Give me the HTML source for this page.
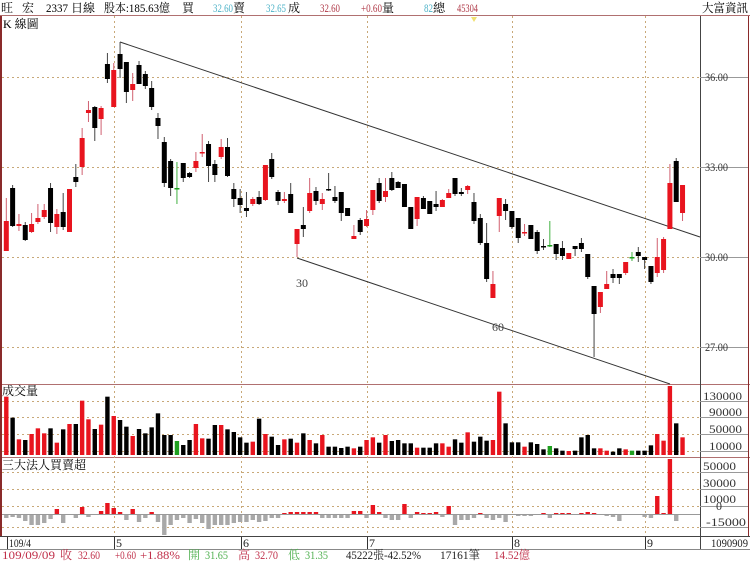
<!DOCTYPE html>
<html><head><meta charset="utf-8"><style>
html,body{margin:0;padding:0;background:#fff;width:750px;height:561px;overflow:hidden}
svg{display:block}
text{font-family:"Liberation Serif","Noto Serif CJK TC","Noto Sans CJK TC",serif;font-size:12px}
</style></head><body>
<svg id="s" width="750" height="561" xmlns="http://www.w3.org/2000/svg">
<rect width="750" height="561" fill="#fff"/>
<g font-size="12">
<text x="1" y="12">旺</text><text x="22" y="12">宏</text>
<text x="46" y="12" textLength="22" lengthAdjust="spacingAndGlyphs">2337</text>
<text x="71" y="12">日線</text>
<text x="104" y="12" textLength="66" lengthAdjust="spacingAndGlyphs">股本:185.63億</text>
<text x="182" y="12">買</text>
<text x="213" y="12" fill="#4fb3c8" textLength="20" lengthAdjust="spacingAndGlyphs">32.60</text><text x="233" y="12">賣</text>
<text x="266" y="12" fill="#4fb3c8" textLength="20" lengthAdjust="spacingAndGlyphs">32.65</text><text x="288" y="12">成</text>
<text x="320" y="12" fill="#b03a48" textLength="20" lengthAdjust="spacingAndGlyphs">32.60</text>
<text x="361" y="12" fill="#b03a48" textLength="21" lengthAdjust="spacingAndGlyphs">+0.60</text><text x="382" y="12">量</text>
<text x="424" y="12" fill="#4fb3c8" textLength="9" lengthAdjust="spacingAndGlyphs">82</text><text x="433" y="12">總</text>
<text x="457" y="12" fill="#b03a48" textLength="21" lengthAdjust="spacingAndGlyphs">45304</text>
<text x="702" y="12" textLength="46" lengthAdjust="spacingAndGlyphs">大富資訊</text>
<path d="M471 17 L477 17 L474 22 Z" fill="#f0e070"/>
</g>
<g stroke="#b07070" fill="none" stroke-width="1">
<line x1="0" y1="15.5" x2="750" y2="15.5"/>
<line x1="0" y1="384.5" x2="750" y2="384.5"/>
<line x1="0" y1="457.5" x2="750" y2="457.5"/>
</g>
<line x1="0" y1="536.5" x2="750" y2="536.5" stroke="#444"/>
<line x1="0" y1="549.5" x2="750" y2="549.5" stroke="#888"/>
<line x1="1" y1="16" x2="1" y2="536" stroke="#8a2a2a" stroke-width="2"/>
<line x1="700.5" y1="16" x2="700.5" y2="549" stroke="#444"/>
<line x1="748.5" y1="16" x2="748.5" y2="536" stroke="#8a2a2a"/>
<g stroke="#c8a878" stroke-dasharray="2,3" stroke-width="1">
<line x1="2" y1="77.5" x2="700" y2="77.5"/><line x1="2" y1="167.5" x2="700" y2="167.5"/>
<line x1="2" y1="257.5" x2="700" y2="257.5"/><line x1="2" y1="347.5" x2="700" y2="347.5"/>
<line x1="2" y1="401.5" x2="700" y2="401.5"/><line x1="2" y1="417.5" x2="700" y2="417.5"/>
<line x1="2" y1="434.5" x2="700" y2="434.5"/><line x1="2" y1="451.5" x2="700" y2="451.5"/>
<line x1="2" y1="472.5" x2="700" y2="472.5"/><line x1="2" y1="489.5" x2="700" y2="489.5"/>
<line x1="2" y1="506.5" x2="700" y2="506.5"/><line x1="2" y1="527.5" x2="700" y2="527.5"/>
<line x1="114.5" y1="16" x2="114.5" y2="536"/><line x1="241.5" y1="16" x2="241.5" y2="536"/>
<line x1="367.5" y1="16" x2="367.5" y2="536"/><line x1="512.5" y1="16" x2="512.5" y2="536"/>
<line x1="645.5" y1="16" x2="645.5" y2="536"/>
</g>
<g stroke="#999"><line x1="700" y1="77.5" x2="748" y2="77.5"/><line x1="700" y1="167.5" x2="748" y2="167.5"/><line x1="700" y1="257.5" x2="748" y2="257.5"/><line x1="700" y1="347.5" x2="748" y2="347.5"/>
<line x1="700" y1="401.5" x2="748" y2="401.5"/><line x1="700" y1="417.5" x2="748" y2="417.5"/><line x1="700" y1="434.5" x2="748" y2="434.5"/><line x1="700" y1="451.5" x2="748" y2="451.5"/>
<line x1="700" y1="472.5" x2="748" y2="472.5"/><line x1="700" y1="489.5" x2="748" y2="489.5"/><line x1="700" y1="506.5" x2="748" y2="506.5"/><line x1="700" y1="527.5" x2="748" y2="527.5"/></g>
<line x1="2" y1="514.5" x2="700" y2="514.5" stroke="#999"/>
<text x="3" y="28">K 線圖</text>
<text x="2" y="395">成交量</text>
<text x="2" y="469">三大法人買賣超</text>
<g fill="#333" font-size="12">
<text x="705" y="81" textLength="23" lengthAdjust="spacingAndGlyphs">36.00</text>
<text x="705" y="171" textLength="23" lengthAdjust="spacingAndGlyphs">33.00</text>
<text x="705" y="261" textLength="23" lengthAdjust="spacingAndGlyphs">30.00</text>
<text x="705" y="351" textLength="23" lengthAdjust="spacingAndGlyphs">27.00</text>
<text x="703" y="400" textLength="39" lengthAdjust="spacingAndGlyphs">130000</text>
<text x="709" y="416" textLength="33" lengthAdjust="spacingAndGlyphs">90000</text>
<text x="709" y="433" textLength="33" lengthAdjust="spacingAndGlyphs">50000</text>
<text x="709" y="450" textLength="33" lengthAdjust="spacingAndGlyphs">10000</text>
<text x="703" y="470" textLength="33" lengthAdjust="spacingAndGlyphs">50000</text>
<text x="703" y="487" textLength="33" lengthAdjust="spacingAndGlyphs">30000</text>
<text x="703" y="503" textLength="33" lengthAdjust="spacingAndGlyphs">10000</text>
<text x="716" y="510">0</text>
<text x="706" y="526" textLength="40" lengthAdjust="spacingAndGlyphs">-15000</text>
</g>
<g stroke="#333"><line x1="7.5" y1="537" x2="7.5" y2="549"/><line x1="114.5" y1="537" x2="114.5" y2="549"/><line x1="241.5" y1="537" x2="241.5" y2="549"/><line x1="367.5" y1="537" x2="367.5" y2="549"/><line x1="512.5" y1="537" x2="512.5" y2="549"/><line x1="645.5" y1="537" x2="645.5" y2="549"/></g>
<g font-size="12" fill="#222">
<text x="9" y="547" textLength="22" lengthAdjust="spacingAndGlyphs">109/4</text>
<text x="116" y="547">5</text><text x="243" y="547">6</text><text x="369" y="547">7</text><text x="514" y="547">8</text><text x="647" y="547">9</text>
<text x="711" y="547" textLength="37" lengthAdjust="spacingAndGlyphs">1090909</text>
</g>
<g font-size="12">
<text x="2" y="559" fill="#c0304a" textLength="53" lengthAdjust="spacingAndGlyphs">109/09/09</text>
<text x="60" y="559" fill="#c0304a">收</text>
<text x="78" y="559" fill="#c0304a" textLength="22" lengthAdjust="spacingAndGlyphs">32.60</text>
<text x="115" y="559" fill="#c0304a" textLength="21" lengthAdjust="spacingAndGlyphs">+0.60</text>
<text x="140" y="559" fill="#c0304a" textLength="40" lengthAdjust="spacingAndGlyphs">+1.88%</text>
<text x="188" y="559" fill="#50b050">開</text>
<text x="205" y="559" fill="#50b050" textLength="23" lengthAdjust="spacingAndGlyphs">31.65</text>
<text x="238" y="559" fill="#c0304a">高</text>
<text x="255" y="559" fill="#c0304a" textLength="23" lengthAdjust="spacingAndGlyphs">32.70</text>
<text x="288" y="559" fill="#50b050">低</text>
<text x="305" y="559" fill="#50b050" textLength="23" lengthAdjust="spacingAndGlyphs">31.35</text>
<text x="346" y="559" fill="#222" textLength="75" lengthAdjust="spacingAndGlyphs">45222張-42.52%</text>
<text x="440" y="559" fill="#222" textLength="40" lengthAdjust="spacingAndGlyphs">17161筆</text>
<text x="494" y="559" fill="#c0304a" textLength="36" lengthAdjust="spacingAndGlyphs">14.52億</text>
</g>
<g stroke="#333" stroke-width="1" fill="none">
<path d="M120 42 L700 237"/>
<path d="M297 258 L670 384"/>
</g>
<text x="296" y="287" fill="#444">30</text>
<text x="492" y="331" fill="#444">60</text>
<g id="c"></g>
</svg>
<script>
var D=[
"r 221 251 198 251","b 188 226 185 227","r 224 226 214 231","b 225 240 222 241","r 224 232 213 233","r 218 222 204 224","r 210 217 204 219","b 188 223 183 232","r 214 227 209 234","b 212 227 193 230",
"r 189 232 189 232","b 177 182 164 187","r 138 167 128 175","r 110 113 101 122","b 107 128 106 141","r 108 119 106 135","b 64 79 53 83","r 70 107 63 107","b 54 69 42 78","b 62 92 62 103",
"r 84 90 73 101","b 65 84 61 84","b 74 86 71 89","b 88 107 81 110","b 118 126 113 139","b 142 183 137 187","b 161 188 159 196","g 188 189 162 204","b 163 178 163 182","b 173 177 172 178",
"r 161 168 152 172","r 152 153 134 157","b 144 166 141 182","b 164 175 160 182","r 147 157 139 159","b 147 176 138 177","b 189 199 183 207","b 198 205 189 213","b 208 211 192 217","r 199 204 197 206",
"b 197 204 191 205","r 165 200 165 201","b 159 177 153 179","b 192 201 190 205","r 199 201 192 203","b 194 213 183 213","r 229 244 229 257","b 225 229 207 237","r 193 211 178 213","b 191 201 187 205",
"r 199 204 193 210","b 189 190 173 191","b 197 201 186 203","b 192 213 192 221","b 208 216 208 216","r 236 239 225 239","b 220 232 218 235","r 219 226 210 227","r 190 210 190 215","b 183 201 178 203",
"r 191 197 178 202","b 178 190 172 191","b 182 188 181 188","b 184 207 184 207","b 207 229 207 229","r 197 219 197 226","b 198 209 196 209","b 201 214 201 214","b 204 207 191 211","r 200 207 199 207",
"r 193 198 189 198","b 178 194 178 196","b 192 194 188 196","r 186 190 185 194","b 202 221 193 224","b 218 243 214 245","b 243 279 223 282","r 284 298 271 298","r 198 216 198 232","b 204 211 199 220",
"b 211 227 211 229","b 218 238 218 243","r 232 233 224 236","b 225 239 225 239","b 232 251 230 254","b 246 247 239 250","g 245 246 221 247","b 244 254 244 260","b 248 256 241 260","r 253 259 253 259",
"b 246 249 246 256","b 243 249 238 252","b 254 277 254 279","b 286 314 286 357","r 292 307 292 313","r 284 289 271 289","b 274 278 269 283","b 274 278 274 284","r 262 273 262 275","g 257 258 252 261",
"b 252 256 247 262","b 257 260 257 269","b 266 282 266 284","r 257 273 238 277","r 239 270 237 273","r 183 229 164 229","b 161 202 158 202","r 185 213 185 221"];
var V=[50,113,178,180,162,145,160,145,188,148,132,132,62,118,147,134,50,108,120,140,168,147,160,142,100,165,165,183,195,180,132,175,176,135,135,148,156,172,188,185,116,162,170,195,178,176,188,160,180,190,165,200,200,204,200,205,200,180,172,188,165,183,180,190,190,203,203,203,190,190,200,178,188,157,185,170,182,180,35,130,187,187,200,187,192,208,198,205,212,213,212,172,165,205,205,212,215,205,208,212,212,212,196,162,182,18,130,172];
var I=[-3,-2,-3,-6,-10,-10,-8,-4,5,-8,0,-3,7,-2,0,3,11,6,2,-5,5,-7,-3,2,-7,-20,-10,-5,-3,-8,-4,-8,-14,-10,-10,-10,-8,-7,-7,-5,-7,-6,-3,-3,1,2,2,2,2,2,-3,-3,-3,-3,-3,3,3,-3,9,2,-3,-5,-5,10,-3,2,1,1,2,-2,8,-10,-5,-5,-3,1,-3,-5,-3,-7,0,-1,-1,-1,0,1,-3,1,1,1,0,1,2,1,0,-1,-2,-6,0,0,0,-2,-3,18,1,55,-6,0];
var col={r:"#e8141e",b:"#000",g:"#20a020"};
var h="";
for(var i=0;i<D.length;i++){
 var p=D[i].split(" "),t=p[0],a=+p[1],b=+p[2],hi=+p[3],lo=+p[4],x=6.3+6.32*i;
 var wc=t=="r"?"#d06070":(t=="g"?"#40b040":"#444");
 h+='<line x1="'+x+'" y1="'+hi+'" x2="'+x+'" y2="'+lo+'" stroke="'+wc+'" stroke-width="1"/>';
 var bh=Math.max(b-a,1.5);
 h+='<rect x="'+(x-2.5)+'" y="'+a+'" width="5" height="'+bh+'" fill="'+col[t]+'"/>';
 var vt=380+V[i]/3;
 var vc=(i==78)?"#e8141e":col[t];
 h+='<rect x="'+(x-2.2)+'" y="'+vt+'" width="4.4" height="'+(455-vt)+'" fill="'+vc+'"/>';
 var v=I[i];
 if(v>0)h+='<rect x="'+(x-2.2)+'" y="'+(514-v)+'" width="4.4" height="'+v+'" fill="#e8141e"/>';
 else if(v<0)h+='<rect x="'+(x-2.2)+'" y="515" width="4.4" height="'+(-v)+'" fill="#a8a8a8"/>';
}
document.getElementById("c").innerHTML=h;
</script>
</body></html>
